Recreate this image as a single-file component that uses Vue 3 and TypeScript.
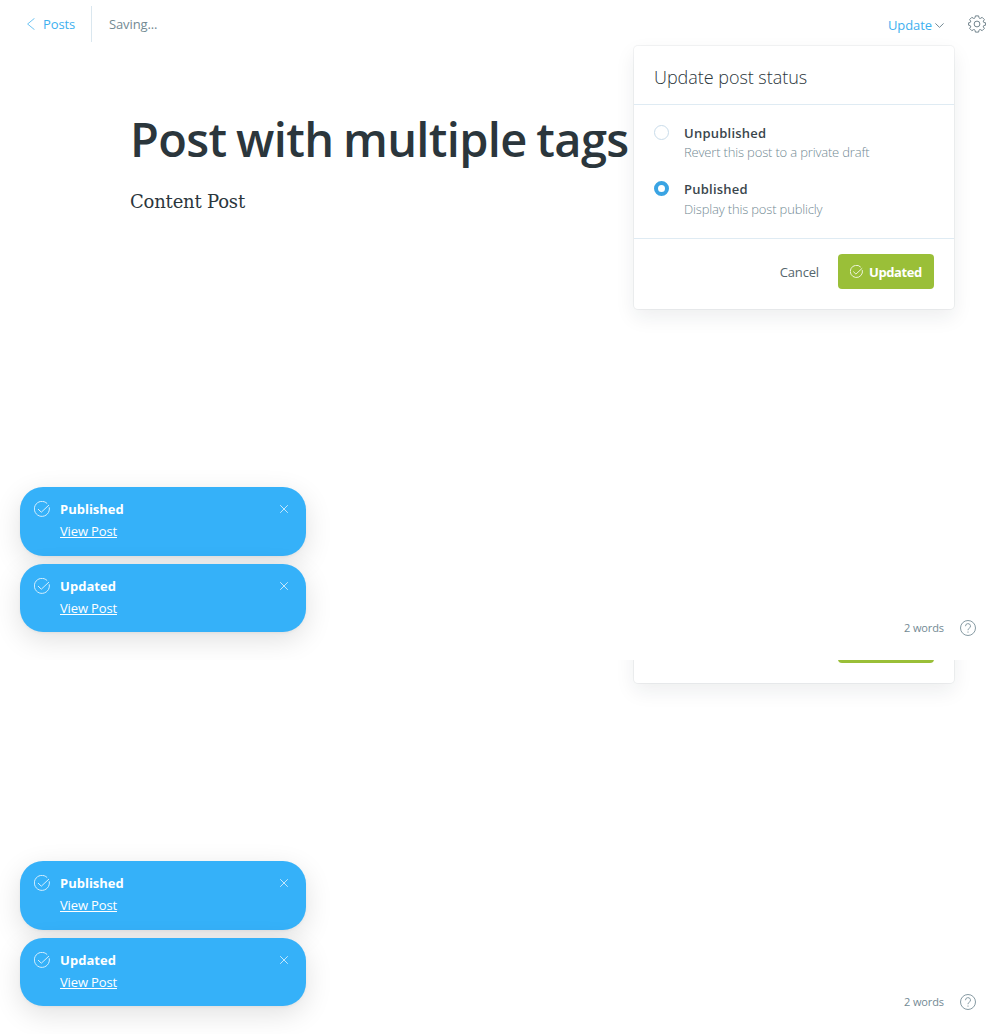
<script setup lang="ts">
interface StatusOption { id: string; label: string; hint: string; checked: boolean }
interface Toast { id: string; title: string; action: string }

const screens = ['full', 'tail']
const options: StatusOption[] = [
  { id: 'draft', label: 'Unpublished', hint: 'Revert this post to a private draft', checked: false },
  { id: 'published', label: 'Published', hint: 'Display this post publicly', checked: true },
]
const toasts: Toast[] = [
  { id: 'published', title: 'Published', action: 'View Post' },
  { id: 'updated', title: 'Updated', action: 'View Post' },
]
</script>

<template>
  <div class="page">
    <section v-for="screen in screens" :key="screen" class="screen" :class="screen">
      <div class="editor">
        <template v-if="screen === 'full'">
          <header class="topbar">
            <a class="back">
              <svg width="8" height="12" viewBox="0 0 8 12"><path d="M7.500.3.600 6l6.900 5.700" /></svg>
              <span>Posts</span>
            </a>
            <span class="saving">Saving...</span>
            <button class="update">
              <span>Update</span>
              <svg width="9" height="5" viewBox="0 0 9 5"><path d="M.4.4 4.500 4.400 8.600.4" /></svg>
            </button>
            <svg class="gear" width="18" height="18" viewBox="0 0 18 18">
              <circle cx="9" cy="9" r="2.900" />
              <path d="M7 2.800 7.400.9h3.200l.4 1.900q.6 1 1.700.5l1.400-1 2.300 2.300-1 1.400q-.5 1.100.5 1.500l1.700.3v2.400l-1.700.3q-1 .4-.5 1.500l1 1.400-2.300 2.300-1.400-1q-1.100-.5-1.700.5l-.4 1.900H7.400L7 15.200q-.6-1-1.700-.5l-1.400 1-2.300-2.300 1-1.400q.5-1.100-.5-1.500L.6 10.200V7.800l1.500-.3q1-.4.5-1.500l-1-1.400 2.300-2.300 1.400 1q1.100.5 1.700-.5z" />
            </svg>
          </header>

          <main class="post">
            <h1>Post with multiple tags</h1>
            <p>Content Post</p>
          </main>
        </template>

        <div class="menu">
          <template v-if="screen === 'full'">
            <h2>Update post status</h2>
            <div class="options">
              <div v-for="o in options" :key="o.id" class="option" :class="o.id">
                <i class="radio" :class="{ on: o.checked }"></i>
                <div>
                  <div class="label">{{ o.label }}</div>
                  <div class="hint">{{ o.hint }}</div>
                </div>
              </div>
            </div>
          </template>
          <footer>
            <button v-if="screen === 'full'" class="cancel">Cancel</button>
            <button class="confirm">
              <template v-if="screen === 'full'">
                <svg width="13" height="13" viewBox="0 0 16 16"><path d="M15.200 6.300A7.500 7.500 0 1 1 13.200 2.600M4 8l3.300 3.200L15 4" /></svg>
                <span>Updated</span>
              </template>
            </button>
          </footer>
        </div>

        <div class="toasts">
          <article v-for="t in toasts" :key="t.id" class="toast">
            <svg class="check" width="16" height="16" viewBox="0 0 16 16"><path d="M15.200 6.300A7.500 7.500 0 1 1 13.200 2.600M4 8l3.300 3.200L15 4" /></svg>
            <div class="body">
              <div class="title" :class="t.id">{{ t.title }}</div>
              <a>{{ t.action }}</a>
            </div>
            <svg class="close" width="8" height="8" viewBox="0 0 8 8"><path d="M.2.2l7.600 7.600M7.800.2.2 7.800" /></svg>
          </article>
        </div>

        <div class="status">
          <span>2 words</span>
          <svg width="16" height="16" viewBox="0 0 16 16"><circle cx="8" cy="8" r="7.500" /><path d="M5.500 6.200a2.500 2.500 0 1 1 3.500 2.200q-1 .5-1 1.800M8 11.500v1.200" /></svg>
        </div>
      </div>
    </section>
  </div>
</template>

<style>
body { background: #fff; }
</style>

<style scoped>
.page { width: 1000px; height: 1034px; overflow: hidden; font-family: 'Open Sans', 'Noto Sans', sans-serif; font-size: 13px; color: #2b363c; }
.screen { display: flex; align-items: flex-end; overflow: hidden; height: 660px; }
.screen.tail { height: 374px; }
.editor { position: relative; flex: none; width: 1000px; height: 660px; overflow: hidden; background: #fff; }
button { border: 0; padding: 0; background: none; font: inherit; }
svg { display: block; flex: none; fill: none; stroke: currentColor; }
.topbar { display: flex; align-items: center; height: 48px; padding: 0 14px 0 27px; color: #738a94; }
.back { display: flex; align-items: center; gap: 8px; width: 64px; height: 36px; border-right: 1px solid #dae7ef; color: #3eb0ef; letter-spacing: -.12px; }
.back svg { opacity: .75; }
.saving { flex: 1; margin-left: 17px; letter-spacing: -.12px; }
.update { display: flex; align-items: center; gap: 3px; margin-right: 24px; padding-top: 2px; color: #3eb0ef; letter-spacing: -.08px; }
.update svg { margin-top: 1px; color: #738a94; }
.gear { color: #71838c; }
.post { margin: 61px 130px 0; }
h1 { margin: 0; font-size: 47px; line-height: 60px; font-weight: 600; letter-spacing: -.64px; word-spacing: -2px; white-space: nowrap; }
p { margin: 13px 0 0; font: 18px/40px 'DejaVu Serif', serif; letter-spacing: -.2px; }
.menu { position: absolute; left: 634px; top: 46px; display: flex; flex-direction: column; width: 320px; height: 263px; border-radius: 4px; background: #fff; box-shadow: 0 0 0 1px rgba(99,114,130,.08), 0 8px 20px rgba(27,39,51,.08); }
h2 { margin: 0; height: 58px; padding: 0 20px; border-bottom: 1px solid #dfebf3; font-size: 18px; font-weight: 300; line-height: 63px; letter-spacing: -.04px; }
.options { height: 115px; padding: 18px 20px 0; border-bottom: 1px solid #dfebf3; }
.option { display: flex; gap: 15px; height: 56px; }
.radio { width: 13px; height: 13px; margin-top: 2px; border: 1px solid #c9dcea; border-radius: 50%; }
.radio.on { width: 7px; height: 7px; border: 4px solid #3aa4e3; }
.label { font-weight: 600; line-height: 20px; letter-spacing: .24px; color: #3a464c; }
.hint { font-weight: 300; line-height: 20px; letter-spacing: -.17px; color: #738a94; }
.draft .hint { line-height: 18px; }
footer { display: flex; justify-content: flex-end; align-items: center; gap: 19px; margin-top: auto; padding: 0 20px 20px; }
.cancel { color: #54666d; letter-spacing: -.15px; }
.confirm { display: flex; align-items: center; gap: 6px; box-sizing: border-box; width: 96px; height: 35px; padding-left: 12px; border-radius: 4px; background: #9abf38; color: #fff; font-weight: 700; letter-spacing: -.4px; }
.toasts { position: absolute; left: 20px; top: 487px; display: grid; gap: 8px; }
.toast { display: flex; box-sizing: border-box; width: 286px; height: 68.500px; padding: 14px 18px 0 14px; border-radius: 23px; background: #35b1f9; color: #fff; box-shadow: 0 1px 3px rgba(0,0,0,.05), 0 8px 28px rgba(0,0,0,.12); }
.body { flex: 1; margin: -3px 0 0 10px; }
.title { font-weight: 700; line-height: 22px; }
.title.updated { letter-spacing: .06px; }
.body a { display: block; width: max-content; line-height: 22px; letter-spacing: -.14px; text-decoration: underline; }
.check { opacity: .8; }
.close { margin-top: 4px; opacity: .7; }
.status { position: absolute; right: 24px; bottom: 24px; display: flex; align-items: center; gap: 16px; font-size: 11px; letter-spacing: -.1px; color: #738a94; }
.status span { margin-top: -2px; }
.status svg { opacity: .85; }
</style>
